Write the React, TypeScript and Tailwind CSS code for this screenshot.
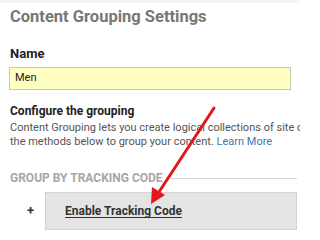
import React from "react";

function Arrow() {
  return (
    <svg
      className="pointer-events-none absolute left-0 top-0"
      width="300"
      height="234"
      viewBox="0 0 300 234"
    >
      <line x1="214" y1="108" x2="159" y2="192" stroke="#e2161b" strokeWidth="3" strokeLinecap="round" />
      <polygon points="151,204 152,187 165,195" fill="#e2161b" />
    </svg>
  );
}

export default function App() {
  return (
    <div
      className="relative h-[234px] w-[300px] overflow-hidden bg-white"
      style={{ fontFamily: "Roboto, 'Liberation Sans', sans-serif" }}
    >
      <div className="h-[3px] w-full bg-[#f3f3f3]" />
      <div className="pl-[10px] pr-[3px]">
        <h1 className="pt-[2px] text-[16.5px] font-bold leading-[24px] text-[#777777]">
          Content Grouping Settings
        </h1>

        <h2 className="mt-[16px] text-[13px] font-bold leading-[18px] text-[#222222]">Name</h2>
        <div className="mt-[4px] flex h-[23px] w-[282px] -translate-x-[1px] items-center border border-[#c9c9b0] bg-[#ffffc2] px-[5px] text-[11px] text-[#222222]">
          Men
        </div>

        <h3 className="mt-[13px] text-[12px] font-bold leading-[16px] text-[#222222]">
          Configure the grouping
        </h3>
        <p className="mt-[2px] whitespace-nowrap text-[11px] leading-[14px] text-[#555555]">
          Content Grouping lets you create logical collections of site c
          <br />
          the methods below to group your content.{" "}
          <span className="text-[#3b78b6]">Learn More</span>
        </p>

        <div className="mt-[21px] flex items-center gap-[8px]">
          <span className="whitespace-nowrap text-[12px] font-bold leading-[16px] text-[#a6a6a6]">
            GROUP BY TRACKING CODE
          </span>
          <div className="h-px flex-1 bg-[#d6d6d6]" />
        </div>

        <div className="mt-[6px] flex items-center">
          <span className="w-[35px] pl-[17px] text-[13px] font-bold text-[#333333]">+</span>
          <div className="flex h-[38px] flex-1 items-center border border-dotted border-[#c4c4c4] bg-[#e4e4e4] pl-[19px]">
            <span className="text-[12px] font-bold text-[#333333] underline underline-offset-2">
              Enable Tracking Code
            </span>
          </div>
        </div>
      </div>
      <Arrow />
    </div>
  );
}
